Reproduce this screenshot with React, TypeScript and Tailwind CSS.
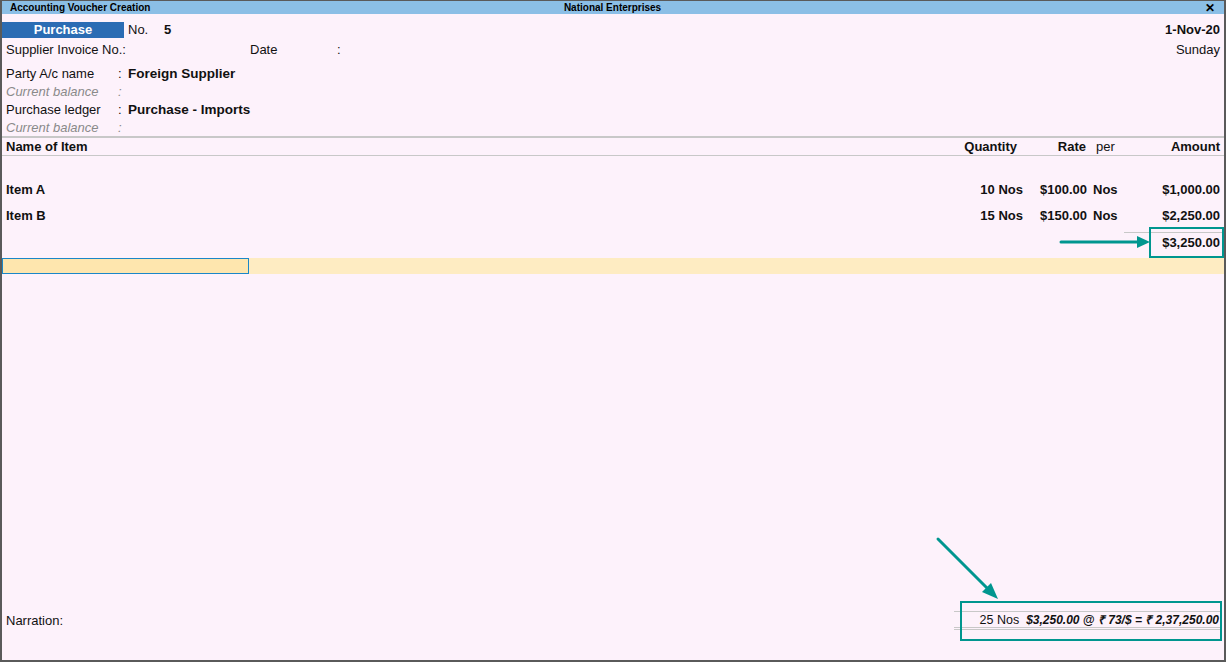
import React from 'react';

const font = { fontFamily: '"Liberation Sans", Arial, sans-serif' };

const App = () => {
  return (
    <div
      className="relative w-[1226px] h-[662px] flex flex-col bg-[#fdf2fb] border-t border-l-2 border-r-2 border-b-2 border-[#5a5a5a] text-[13px] text-[#111]"
      style={font}
    >
      {/* Title bar */}
      <div className="h-[13px] bg-[#8bbfe6] flex items-center px-[8px] text-[10px] font-bold text-black leading-none">
        <div className="flex-1">Accounting Voucher Creation</div>
        <div className="flex-1 text-center">National Enterprises</div>
        <div className="flex-1 text-right text-[12px] pr-[1px]">✕</div>
      </div>

      {/* Voucher header */}
      <div className="pl-[4px] pr-[4px]">
        <div className="mt-[8px] h-[16px] flex items-center">
          <div className="w-[122px] h-[16px] -ml-[4px] bg-[#2b6cb4] text-white font-bold text-[13px] flex items-center justify-center">
            Purchase
          </div>
          <div className="ml-[4px] w-[36px]">No.</div>
          <div className="font-bold">5</div>
          <div className="flex-1 text-right font-bold">1-Nov-20</div>
        </div>
        <div className="mt-[3px] h-[17px] flex items-center">
          <div className="w-[244px]">Supplier Invoice No.:</div>
          <div className="w-[87px]">Date</div>
          <div>:</div>
          <div className="flex-1 text-right">Sunday</div>
        </div>
        <div className="mt-[7px] h-[18px] flex items-center">
          <div className="w-[112px]">Party A/c name</div>
          <div className="w-[10px]">:</div>
          <div className="font-bold text-[13.5px]">Foreign Supplier</div>
        </div>
        <div className="h-[18px] flex items-center italic text-[#8a8a8a]">
          <div className="w-[112px]">Current balance</div>
          <div className="w-[10px]">:</div>
        </div>
        <div className="h-[18px] flex items-center">
          <div className="w-[112px]">Purchase ledger</div>
          <div className="w-[10px]">:</div>
          <div className="font-bold text-[13.5px]">Purchase - Imports</div>
        </div>
        <div className="h-[17px] flex items-center italic text-[#8a8a8a]">
          <div className="w-[112px]">Current balance</div>
          <div className="w-[10px]">:</div>
        </div>
      </div>

      {/* Item table header */}
      <div className="border-t-2 border-b border-[#c8c8c8] h-[20px] pl-[4px] pr-[4px] flex items-center font-bold">
        <div className="flex-1">Name of Item</div>
        <div className="w-[80px] text-right pr-[6px]">Quantity</div>
        <div className="w-[64px] text-right pr-[1px]">Rate</div>
        <div className="w-[43px] pl-[9px] font-normal">per</div>
        <div className="w-[90px] text-right">Amount</div>
      </div>

      {/* Items */}
      <div className="h-[21px]" />
      <div className="h-[26px] pl-[4px] pr-[4px] flex items-center font-bold">
        <div className="flex-1">Item A</div>
        <div className="w-[80px] text-right">10 Nos</div>
        <div className="w-[64px] text-right">$100.00</div>
        <div className="w-[43px] pl-[6px]">Nos</div>
        <div className="w-[90px] text-right">$1,000.00</div>
      </div>
      <div className="h-[24px] pt-[2px] pl-[4px] pr-[4px] flex items-center font-bold">
        <div className="flex-1">Item B</div>
        <div className="w-[80px] text-right">15 Nos</div>
        <div className="w-[64px] text-right">$150.00</div>
        <div className="w-[43px] pl-[6px]">Nos</div>
        <div className="w-[90px] text-right">$2,250.00</div>
      </div>

      {/* Total */}
      <div className="h-[31px] flex justify-end items-start">
        <div className="w-[25px] mt-[5px] border-t border-[#c8c8c8]" />
        <div className="w-[75px] h-[31px] border-2 border-[#00968f] flex flex-col">
          <div className="mt-[3px] border-t border-[#c8c8c8]" />
          <div className="h-[19px] flex items-center justify-end pr-[2px] font-bold">$3,250.00</div>
        </div>
      </div>

      {/* Active entry row */}
      <div className="h-[16px] flex bg-[#feecc2]">
        <div className="w-[247px] border border-[#1b87c8] bg-[#fee6ae]" />
      </div>

      <div className="flex-1" />

      {/* Narration / totals */}
      <div className="h-[40px] flex items-stretch pl-[4px] pr-[2px] mb-[19px]">
        <div className="flex-1 flex items-center">Narration:</div>
        <div className="w-[6px] flex flex-col">
          <div className="mt-[10px] border-t border-[#c8c8c8]" />
          <div className="mt-[15px] border-t border-[#c8c8c8]" />
          <div className="mt-[1px] border-t border-[#c8c8c8]" />
        </div>
        <div className="w-[262px] border-2 border-[#00968f] flex flex-col">
          <div className="mt-[8px] border-t border-[#c8c8c8]" />
          <div className="h-[15px] pt-[1px] flex items-center justify-end pr-[1px] text-[12.5px]">
            <span>25 Nos</span>
            <span className="ml-[7px] font-bold italic text-[12px]">$3,250.00 @ ₹ 73/$ = ₹ 2,37,250.00</span>
          </div>
          <div className="border-t border-[#c8c8c8]" />
          <div className="mt-[1px] border-t border-[#c8c8c8]" />
        </div>
      </div>

      {/* Annotation arrows */}
      <svg className="absolute left-[-2px] top-[-1px] pointer-events-none" width="1226" height="662">
        <line x1="1061" y1="242" x2="1140" y2="242" stroke="#00968f" strokeWidth="3" strokeLinecap="round" />
        <polygon points="1137,236 1150,242 1137,248" fill="#00968f" />
        <line x1="938" y1="539" x2="988" y2="589" stroke="#00968f" strokeWidth="3" strokeLinecap="round" />
        <polygon points="982,592 998,599 991,583" fill="#00968f" />
      </svg>
    </div>
  );
};

export default App;
